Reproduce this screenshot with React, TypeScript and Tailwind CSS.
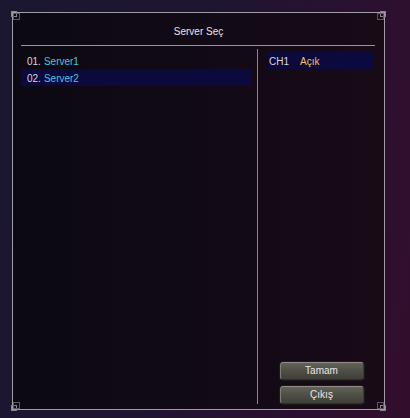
const servers = [
  { no: '01.', name: 'Server1' },
  { no: '02.', name: 'Server2' },
];

const Corner = ({ className }: { className: string }) => (
  <svg width="9" height="9" viewBox="0 0 9 9" className={`absolute ${className}`} shapeRendering="crispEdges">
    <rect x="0.5" y="0.5" width="5" height="5" fill="none" stroke="#8a848c" />
    <rect x="2.5" y="2.5" width="6" height="6" fill="none" stroke="#5c5660" />
  </svg>
);

const GameButton = ({ label }: { label: string }) => (
  <button className="w-[84px] h-[18px] rounded-[3px] border border-t-[#8e8e84] border-l-[#7e7e74] border-r-[#3a3a34] border-b-[#2e2e28] bg-gradient-to-b from-[#626258] via-[#4e4e46] to-[#404038] text-[10px] leading-none text-[#e8e8e8] shadow-[0_0_0_1px_#1a1a18]">
    {label}
  </button>
);

export default function App() {
  return (
    <div
      className="w-[410px] h-[418px] pt-[12px] pl-[12px] bg-[linear-gradient(100deg,#1b1730_0%,#1f1530_45%,#2c1030_80%,#330e2c_100%)]"
      style={{ fontFamily: '"Liberation Sans", Arial, sans-serif' }}
    >
      <div className="relative w-[373px] h-[398px] border border-[#a29ca4] bg-[linear-gradient(90deg,#0c0912_0%,#110a16_50%,#190a16_100%)] flex flex-col">
        <Corner className="-left-[2px] -top-[2px]" />
        <Corner className="-right-[2px] -top-[2px] -scale-x-100" />
        <Corner className="-left-[2px] -bottom-[2px] -scale-y-100" />
        <Corner className="-right-[2px] -bottom-[2px] -scale-100" />

        {/* Title */}
        <div className="h-[32px] flex items-center justify-center pt-[4px] text-[10px] text-[#e8e4e8]">Server Seç</div>
        <div className="ml-[8px] mr-[9px] h-px bg-[#9a949c]" />

        {/* Content */}
        <div className="flex flex-1 pb-[5px]">
          {/* Server list */}
          <div className="w-[244px] pl-[8px] pt-[6px] pr-[5px]">
            {servers.map((s, i) => (
              <div
                key={s.no}
                className={`h-[17px] flex items-center pt-[2px] pl-[6px] text-[10px] ${i === 1 ? 'bg-[#0c0a3c]' : ''}`}
              >
                <span className="text-[#d8d8dc]">{s.no}</span>
                <span className="ml-[3px] text-[#46c2e6]">{s.name}</span>
              </div>
            ))}
          </div>

          <div className="w-px mt-[3px] bg-[#8c8690]" />

          {/* Channels */}
          <div className="flex-1 flex flex-col pt-[6px]">
            <div className="ml-[10px] mr-[10px] h-[17px] flex items-center pt-[2px] bg-[#0c0a3c] pl-[1px] text-[10px]">
              <span className="w-[31px] text-[#d8d8dc]">CH1</span>
              <span className="text-[#f2c264]">Açık</span>
            </div>
            <div className="mt-auto flex flex-col items-center gap-[6px] pl-[1px]">
              <GameButton label="Tamam" />
              <GameButton label="Çıkış" />
            </div>
          </div>
        </div>
      </div>
    </div>
  );
}
